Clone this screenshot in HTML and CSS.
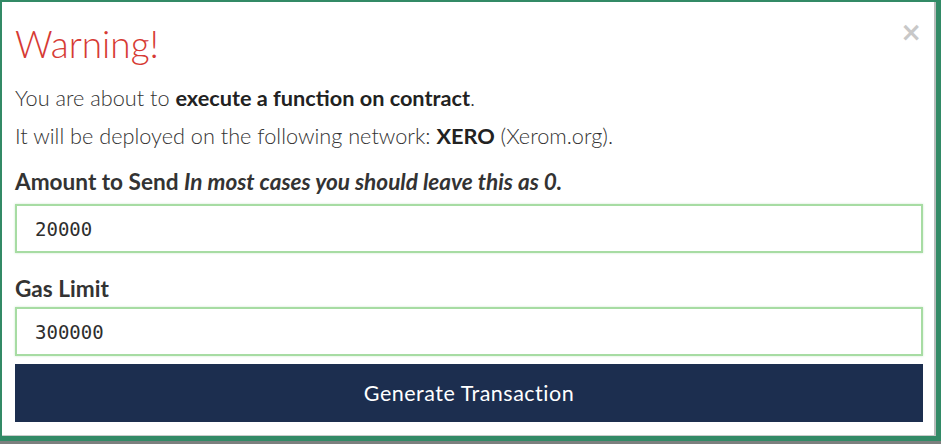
FILE: index.html
```html
<!DOCTYPE html>
<html>
<head>
<meta charset="utf-8">
<link rel="stylesheet" href="styles.css">
</head>
<body>
<div class="frame">
  <div class="modal">
    <button class="close" aria-label="Close">&times;</button>
    <h1 class="title">Warning!</h1>
    <p class="line">You are about to <strong>execute a function on contract</strong>.</p>
    <p class="line">It will be deployed on the following network: <strong>XERO</strong> (Xerom.org).</p>
    <label class="label">Amount to Send <em>In most cases you should leave this as 0.</em></label>
    <div class="input">20000</div>
    <label class="label">Gas Limit</label>
    <div class="input">300000</div>
    <button class="btn">Generate Transaction</button>
  </div>
</div>
<div class="bottom-strip"></div>
</body>
</html>
```
FILE: styles.css
```css
html, body {
  margin: 0;
  padding: 0;
  height: 444px;
  overflow: hidden;
  background: #328a66;
}
body {
  display: flex;
  flex-direction: column;
  font-family: Lato, "Liberation Sans", sans-serif;
  color: #333;
}
.frame {
  flex: 1;
  padding: 2px 5px 5px 2px;
}
.modal {
  position: relative;
  box-sizing: border-box;
  height: 434px;
  background: #fff;
  padding: 14px 11px 0 13px;
  border-right: 2px solid #b9bcbb;
  border-bottom: 1px solid #c9cccb;
  display: flex;
  flex-direction: column;
}
.close {
  position: absolute;
  top: 17px;
  right: 12px;
  border: 0;
  background: none;
  color: #c8c8c8;
  font-size: 26px;
  font-weight: 700;
  line-height: 1;
  padding: 0;
  font-family: "DejaVu Sans", sans-serif;
}
.title {
  margin: 0;
  font-size: 37px;
  font-weight: 300;
  color: #d63a34;
  line-height: 56px;
}
.line {
  margin: 12px 0 0;
  font-size: 21.7px;
  font-weight: 300;
  line-height: 28px;
  color: #333;
}
.line + .line {
  margin-top: 10px;
}
.line strong {
  font-weight: 700;
  color: #222;
}
.label {
  margin-top: 19px;
  font-size: 22.6px;
  font-weight: 700;
  line-height: 26px;
  color: #333;
}
.label em {
  font-style: italic;
}
.input {
  margin-top: 9px;
  height: 49px;
  box-sizing: border-box;
  border: 2px solid #a7dca3;
  box-shadow: 0 0 2px rgba(100, 190, 100, 0.35);
  padding: 0 18px;
  display: flex;
  align-items: center;
  font-family: "DejaVu Sans Mono", monospace;
  font-size: 19px;
  color: #2e2e2e;
}
.input + .label {
  margin-top: 23px;
}
.input + .label + .input {
  margin-top: 5px;
}
.btn {
  margin-top: 8px;
  height: 58px;
  border: 0;
  background: #1c2e4f;
  color: #fff;
  font-family: Lato, "Liberation Sans", sans-serif;
  font-size: 21.5px;
  letter-spacing: 0.5px;
  padding: 0;
}
.bottom-strip {
  height: 3px;
  background: #7c7f7e;
}
```
